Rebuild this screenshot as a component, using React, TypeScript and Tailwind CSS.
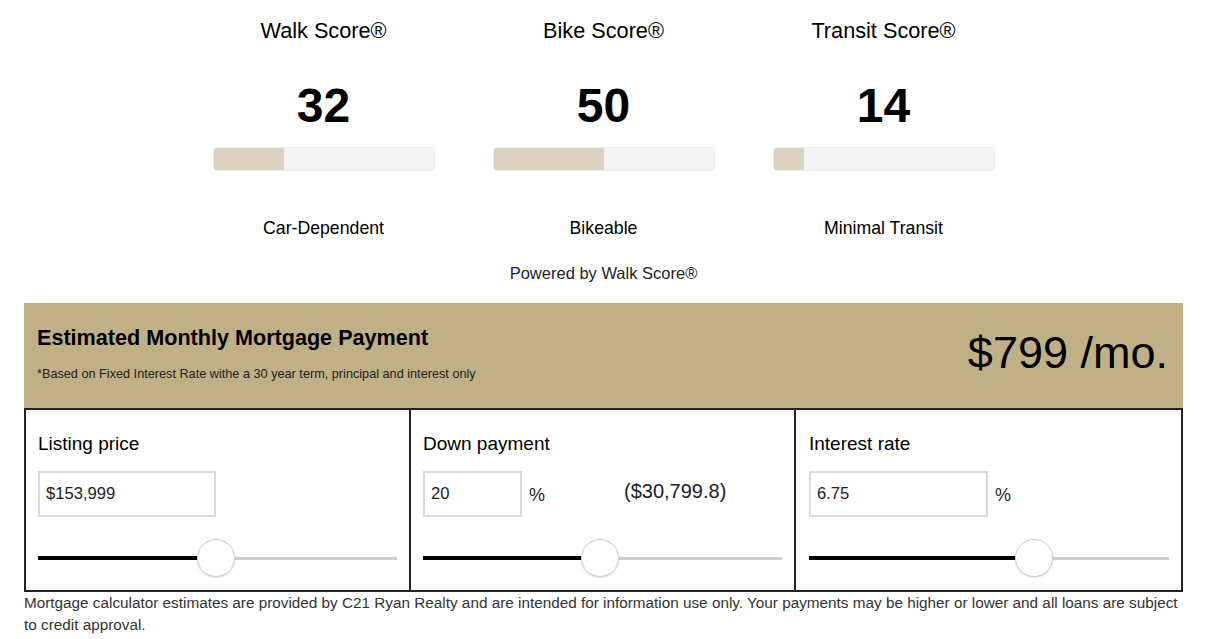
import React from "react";

// Walk/Bike/Transit scores + the mortgage estimate strip underneath.

const SCORES = [
  { title: "Walk Score®", value: 32, label: "Car-Dependent" },
  { title: "Bike Score®", value: 50, label: "Bikeable" },
  { title: "Transit Score®", value: 14, label: "Minimal Transit" },
];

const FONT = { fontFamily: '"Liberation Sans", Arial, Helvetica, sans-serif' };

function ScoreColumn({ title, value, label }: { title: string; value: number; label: string }) {
  return (
    <div className="flex w-[280px] flex-col items-center">
      <div className="mt-[19px] text-[21.7px] leading-[24px] text-black">{title}</div>
      <div className="mt-[39px] text-[48px] font-bold leading-[48px] text-black">{value}</div>
      <div className="mt-[17px] h-[24px] w-[222px] overflow-hidden rounded-[4px] border border-[#ebebeb] bg-[#f4f4f4]">
        <div className="h-full bg-[#dad3c0]" style={{ width: `${value}%` }} />
      </div>
      <div className="mt-[47px] text-[17.7px] leading-[20px] text-black">{label}</div>
    </div>
  );
}

// plain div slider: black filled track, grey remainder, white round thumb
function Slider({ pct }: { pct: number }) {
  return (
    <div className="relative mt-[22px] h-[38px] w-full">
      <div className="absolute left-0 top-[17px] h-[4px] bg-black" style={{ width: `${pct}%` }} />
      <div
        className="absolute right-0 top-[17.5px] h-[3px] bg-[#cfcfcf]"
        style={{ left: `${pct}%` }}
      />
      <div
        className="absolute top-0 h-[38px] w-[38px] -translate-x-1/2 rounded-full border border-[#cdcdcd] bg-white shadow-[0_1px_2px_rgba(0,0,0,0.12)]"
        style={{ left: `${pct}%` }}
      />
    </div>
  );
}

function Field({ value, width }: { value: string; width: number }) {
  return (
    <div
      className="flex h-[46px] items-center border-2 border-[#dadada] bg-white pl-[6px] text-[16.6px] text-[#222]"
      style={{ width }}
    >
      {value}
    </div>
  );
}

export default function App() {
  return (
    <div className="min-h-[639px] bg-white" style={FONT}>
      <div className="ml-[24px] w-[1159px]">
        <div className="flex justify-center">
          {SCORES.map((s) => (
            <ScoreColumn key={s.title} {...s} />
          ))}
        </div>
        <div className="mt-[25px] text-center text-[16.5px] leading-[20px] text-[#222]">
          Powered by Walk Score®
        </div>

        {/* mortgage header */}
        <div className="mt-[20px] flex h-[105px] justify-between bg-[#c0b085] pl-[13px] pr-[15px]">
          <div>
            <div className="mt-[23px] text-[21.6px] font-bold leading-[24px] text-black">
              Estimated Monthly Mortgage Payment
            </div>
            <div className="mt-[16px] text-[12.7px] leading-[16px] text-[#222]">
              *Based on Fixed Interest Rate withe a 30 year term, principal and interest only
            </div>
          </div>
          <div className="mt-[22px] text-[45px] leading-[56px] text-black">$799 /mo.</div>
        </div>

        {/* inputs */}
        <div className="grid grid-cols-3 border-2 border-[#222]">
          <div className="border-r-2 border-[#222] px-[12px] pb-[13px] pt-[22px]">
            <div className="text-[19px] leading-[24px] text-black">Listing price</div>
            <div className="mt-[15px]">
              <Field value="$153,999" width={178} />
            </div>
            <Slider pct={49.7} />
          </div>
          <div className="border-r-2 border-[#222] px-[12px] pb-[13px] pt-[22px]">
            <div className="text-[19px] leading-[24px] text-black">Down payment</div>
            <div className="mt-[15px] flex items-center">
              <Field value="20" width={99} />
              <span className="ml-[7px] mt-[2px] text-[18px] text-[#222]">%</span>
              <span className="ml-[79px] -mt-[6px] text-[20px] text-[#222]">($30,799.8)</span>
            </div>
            <Slider pct={49.4} />
          </div>
          <div className="pl-[13px] pr-[12px] pb-[13px] pt-[22px]">
            <div className="text-[19px] leading-[24px] text-black">Interest rate</div>
            <div className="mt-[15px] flex items-center">
              <Field value="6.75" width={179} />
              <span className="ml-[7px] mt-[2px] text-[18px] text-[#222]">%</span>
            </div>
            <Slider pct={62.4} />
          </div>
        </div>

        <p className="text-[15.3px] leading-[22px] text-[#333]">
          Mortgage calculator estimates are provided by C21 Ryan Realty and are intended for information use
          only. Your payments may be higher or lower and all loans are subject to credit approval.
        </p>
      </div>
    </div>
  );
}
